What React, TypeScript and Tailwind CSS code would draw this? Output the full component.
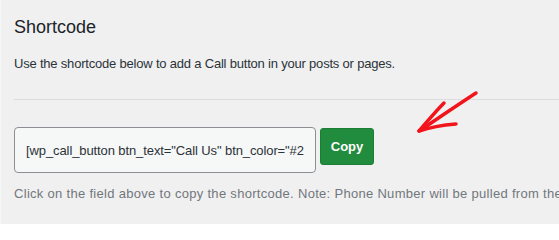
export default function App() {
  const shortcode = '[wp_call_button btn_text="Call Us" btn_color="#2271b1" btn_icon="true"]';

  return (
    <div className="w-[559px] h-[224px] overflow-hidden bg-[#f0f0f1] border-l border-[#f6f7f7] font-['Liberation_Sans',Arial,sans-serif] relative">
      <div className="pl-[13px] pt-[15px]">
        <h2 className="text-[18px] leading-[24px] text-[#1d2327]">Shortcode</h2>
        <p className="mt-[15px] text-[13px] tracking-[-0.2px] leading-[20px] text-[#2c3338]">
          Use the shortcode below to add a Call button in your posts or pages.
        </p>
        <div className="mt-[25px] h-px bg-[#dcdcde]" />

        <div className="mt-[27px] flex items-start gap-[4px]">
          <input
            readOnly
            value={shortcode}
            className="w-[302px] h-[46px] rounded-[4px] border border-[#8c8f94] bg-[#f6f7f7] px-[11px] text-[13px] tracking-[-0.1px] text-[#2c3338] outline-none"
          />
          <button className="mt-px w-[54px] h-[37px] rounded-[3px] border border-[#1a7f35] bg-[#218b3e] text-white text-[13px] font-bold">
            Copy
          </button>
        </div>

        <p className="mt-[11px] whitespace-nowrap text-[13px] tracking-[0.3px] leading-[20px] text-[#72777c]">
          Click on the field above to copy the shortcode. Note: Phone Number will be pulled from the settings.
        </p>
      </div>

      {/* hand-drawn arrow pointing at the copy button */}
      <svg className="absolute left-0 top-0 pointer-events-none" width="559" height="224" viewBox="0 0 559 224">
        <path
          d="M475 93 C455 106 436 119 418 131"
          fill="none"
          stroke="#f2141b"
          strokeWidth="3.5"
          strokeLinecap="round"
        />
        <path
          d="M443 103 C434 112 426 122 418 131 C430 127 443 125 455 124"
          fill="none"
          stroke="#f2141b"
          strokeWidth="3.5"
          strokeLinecap="round"
          strokeLinejoin="round"
        />
      </svg>
    </div>
  );
}
